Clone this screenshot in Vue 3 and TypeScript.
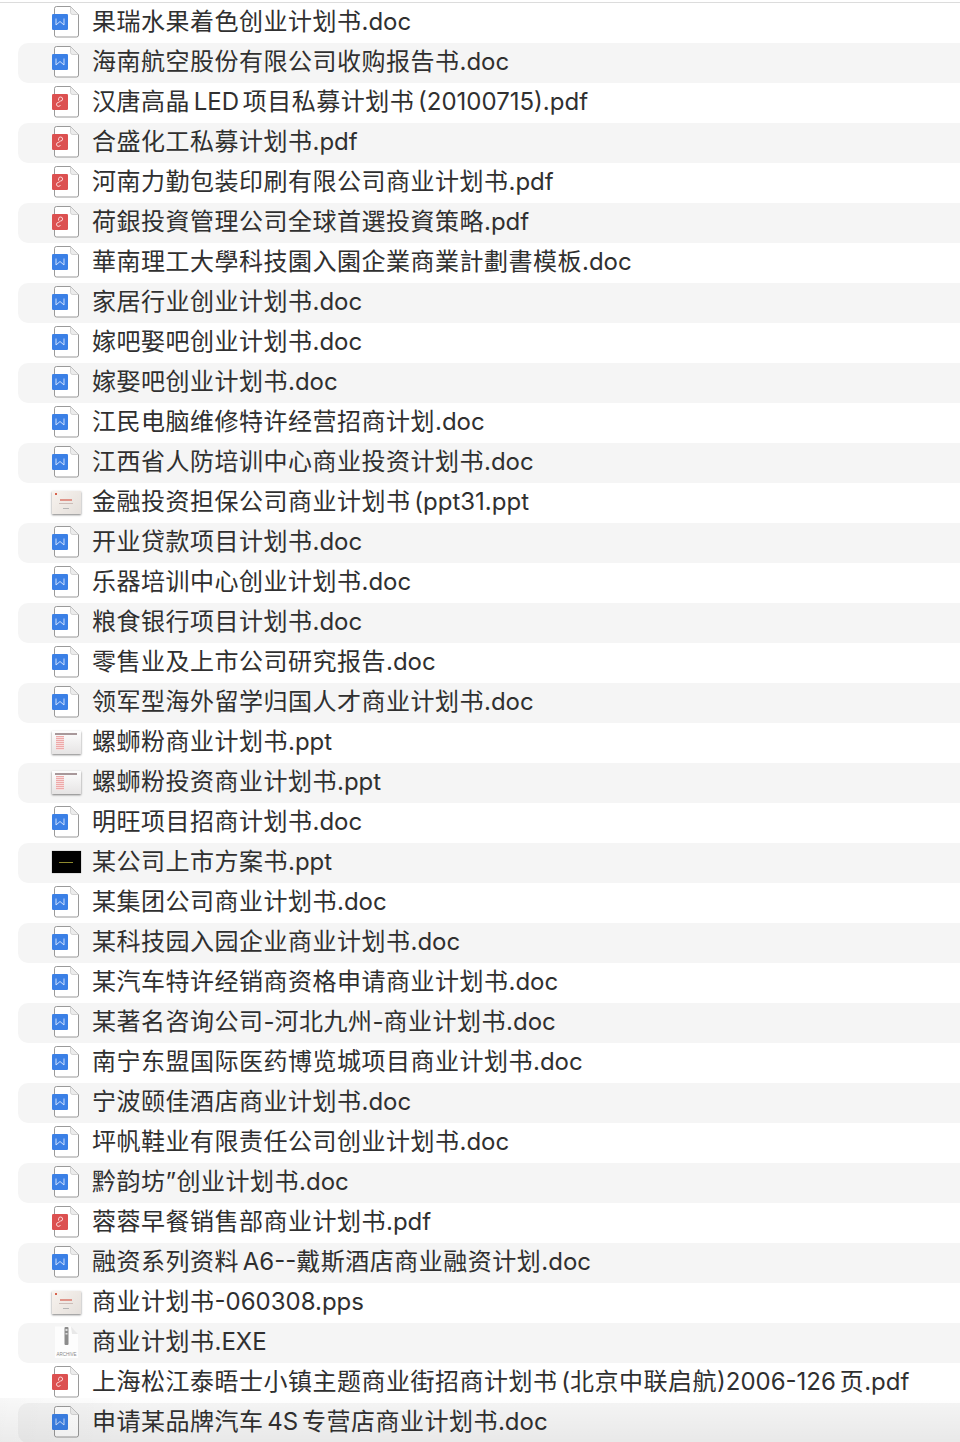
<template>
  <div class="finder">
    <div v-for="(file, i) in files" :key="i" class="row" :class="{ odd: i % 2 === 1 }">
      <span class="icon">
        <svg v-if="file.kind === 'doc' || file.kind === 'pdf'" width="32" height="34" viewBox="0 0 32 34">
          <path d="M4.5 3.5 a2 2 0 0 1 2-2 H20.5 L28.5 9.5 V30 a2 2 0 0 1-2 2 H6.5 a2 2 0 0 1-2-2 Z" fill="#fff" stroke="#8f8f8f" stroke-width=".9" />
          <path d="M20.5 1.5 V7.5 a2 2 0 0 0 2 2 H28.5 Z" fill="#ececec" stroke="#bdbdbd" stroke-width=".6" />
          <template v-if="file.kind === 'doc'">
            <rect x="2" y="9" width="16" height="16" rx="1.2" fill="#3b80e6" />
            <path d="M6 13.5 V20 L10 16.5 L14 20 V13.5" fill="none" stroke="#dbe9ff" stroke-width=".9" />
          </template>
          <template v-else>
            <rect x="2" y="9" width="16" height="16" rx="1.2" fill="#dc5050" />
            <path d="M8.6 15.5 V13.8 a2 2 0 1 1 2 2.2 L8.6 17.4 a2 2 0 1 0 1.8 2.6" fill="none" stroke="#ffe6e6" stroke-width=".9" />
          </template>
        </svg>
        <span v-else-if="file.kind === 'slide'" class="slide">
          <span class="slide-dot"></span>
          <span class="slide-title"></span>
          <span class="slide-sub"></span>
          <span class="slide-foot"></span>
        </span>
        <span v-else-if="file.kind === 'list'" class="slide list">
          <span class="list-head"></span>
          <span class="list-body"></span>
        </span>
        <span v-else-if="file.kind === 'dark'" class="dark"><span></span></span>
        <svg v-else width="32" height="34" viewBox="0 0 32 34">
          <path d="M5 1.5 H21 L28 9 V33 H5 Z" fill="#fdfdfd" />
          <path d="M21 1.5 L28 9 H22 Z" fill="#e8e8e8" />
          <rect x="14.5" y="2" width="4" height="18" rx="1" fill="#8c8c8c" />
          <rect x="15.5" y="4" width="2" height="2" fill="#ddd" />
          <rect x="15.5" y="8" width="2" height="1.5" fill="#ddd" />
          <text x="16.5" y="31" text-anchor="middle" class="archive">ARCHIVE</text>
        </svg>
      </span>
      <span class="name">
        <span v-for="(part, j) in splitRuns(file.name)" :key="j" :class="{ cjk: part.cjk }">{{ part.text }}</span>
      </span>
    </div>
    <div class="edge-shade"></div>
  </div>
</template>

<script setup lang="ts">
type Kind = 'doc' | 'pdf' | 'slide' | 'list' | 'dark' | 'archive'

type FileRow = {
  name: string
  kind: Kind
}

const files: FileRow[] = [
  { name: '果瑞水果着色创业计划书.doc', kind: 'doc' },
  { name: '海南航空股份有限公司收购报告书.doc', kind: 'doc' },
  { name: '汉唐高晶 LED 项目私募计划书 (20100715).pdf', kind: 'pdf' },
  { name: '合盛化工私募计划书.pdf', kind: 'pdf' },
  { name: '河南力勤包装印刷有限公司商业计划书.pdf', kind: 'pdf' },
  { name: '荷銀投資管理公司全球首選投資策略.pdf', kind: 'pdf' },
  { name: '華南理工大學科技園入園企業商業計劃書模板.doc', kind: 'doc' },
  { name: '家居行业创业计划书.doc', kind: 'doc' },
  { name: '嫁吧娶吧创业计划书.doc', kind: 'doc' },
  { name: '嫁娶吧创业计划书.doc', kind: 'doc' },
  { name: '江民电脑维修特许经营招商计划.doc', kind: 'doc' },
  { name: '江西省人防培训中心商业投资计划书.doc', kind: 'doc' },
  { name: '金融投资担保公司商业计划书 (ppt31.ppt', kind: 'slide' },
  { name: '开业贷款项目计划书.doc', kind: 'doc' },
  { name: '乐器培训中心创业计划书.doc', kind: 'doc' },
  { name: '粮食银行项目计划书.doc', kind: 'doc' },
  { name: '零售业及上市公司研究报告.doc', kind: 'doc' },
  { name: '领军型海外留学归国人才商业计划书.doc', kind: 'doc' },
  { name: '螺蛳粉商业计划书.ppt', kind: 'list' },
  { name: '螺蛳粉投资商业计划书.ppt', kind: 'list' },
  { name: '明旺项目招商计划书.doc', kind: 'doc' },
  { name: '某公司上市方案书.ppt', kind: 'dark' },
  { name: '某集团公司商业计划书.doc', kind: 'doc' },
  { name: '某科技园入园企业商业计划书.doc', kind: 'doc' },
  { name: '某汽车特许经销商资格申请商业计划书.doc', kind: 'doc' },
  { name: '某著名咨询公司-河北九州-商业计划书.doc', kind: 'doc' },
  { name: '南宁东盟国际医药博览城项目商业计划书.doc', kind: 'doc' },
  { name: '宁波颐佳酒店商业计划书.doc', kind: 'doc' },
  { name: '坪帆鞋业有限责任公司创业计划书.doc', kind: 'doc' },
  { name: '黔韵坊”创业计划书.doc', kind: 'doc' },
  { name: '蓉蓉早餐销售部商业计划书.pdf', kind: 'pdf' },
  { name: '融资系列资料 A6--戴斯酒店商业融资计划.doc', kind: 'doc' },
  { name: '商业计划书-060308.pps', kind: 'slide' },
  { name: '商业计划书.EXE', kind: 'archive' },
  { name: '上海松江泰晤士小镇主题商业街招商计划书 (北京中联启航)2006-126 页.pdf', kind: 'pdf' },
  { name: '申请某品牌汽车 4S 专营店商业计划书.doc', kind: 'doc' }
]

// CJK and Latin runs get different letter-spacing
function splitRuns(name: string) {
  const runs = name.match(/[\u4e00-\u9fff”]+|[^\u4e00-\u9fff”]+/g) ?? []
  return runs.map(text => ({ text, cjk: /[\u4e00-\u9fff”]/.test(text) }))
}
</script>

<style>
html, body { background: #fff; }
</style>

<style scoped>
.finder {
  position: relative;
  width: 960px;
  height: 1442px;
  overflow: hidden;
  box-sizing: border-box;
  padding-top: 2px;
  background: #fff;
}
.finder::before {
  content: '';
  display: block;
  height: 1px;
  background: #dcdcdc;
}
.row {
  display: flex;
  align-items: center;
  box-sizing: border-box;
  height: 40px;
  padding-bottom: 2px;
  margin-left: 18px;
  margin-right: -20px;
  border-radius: 10px;
}
.odd { background: #f5f5f5; }
.icon {
  width: 32px;
  height: 34px;
  margin-left: 32px;
  margin-right: 10px;
  display: flex;
  align-items: center;
  justify-content: center;
  flex: none;
}
.name {
  font-family: "Inter", "Noto Sans CJK SC", sans-serif;
  font-size: 24px;
  word-spacing: -3px;
  color: #303030;
  white-space: nowrap;
  line-height: 38px;
}
.cjk { letter-spacing: .5px; }
.slide {
  position: relative;
  width: 29px;
  height: 23px;
  box-sizing: border-box;
  background: linear-gradient(135deg, #f8f3ee, #e4dfdb);
  box-shadow: 0 1px 2px rgba(0, 0, 0, .5);
  display: flex;
  flex-direction: column;
  align-items: center;
  filter: blur(.3px);
}
.slide-dot {
  position: absolute;
  left: 3px;
  top: 2px;
  width: 2px;
  height: 2px;
  background: #d8644f;
}
.slide-title { width: 12px; height: 2px; margin-top: 8px; background: #e0958a; }
.slide-sub { width: 14px; height: 1px; margin-top: 2px; background: #cdbdb9; }
.slide-foot { width: 6px; height: 1px; margin-top: 4px; background: #b5b5b5; }
.list { align-items: flex-start; background: linear-gradient(180deg, #fdfdfd, #e6e4e4); }
.list-head { width: 22px; height: 2px; margin: 2px 0 0 3px; background: #a8989a; }
.list-body {
  width: 8px;
  height: 14px;
  margin: 1px 0 0 4px;
  background: repeating-linear-gradient(180deg, #eda9a9 0 1px, #f8dcdc 1px 2px);
}
.dark {
  width: 29px;
  height: 22px;
  background: #000;
  box-shadow: 0 0 1px rgba(0, 0, 0, .5);
  display: flex;
  align-items: center;
  justify-content: center;
}
.dark span { width: 14px; height: 1px; background: #8f8a2e; filter: blur(.4px); }
.archive {
  font-family: "Liberation Sans", sans-serif;
  font-size: 4.5px;
  fill: #888;
}
.edge-shade {
  position: absolute;
  left: 0;
  right: 0;
  bottom: 0;
  height: 44px;
  background:
    linear-gradient(90deg, rgba(0, 0, 0, .03), rgba(0, 0, 0, 0) 140px),
    linear-gradient(180deg, rgba(0, 0, 0, 0), rgba(0, 0, 0, .05));
  pointer-events: none;
}
</style>
